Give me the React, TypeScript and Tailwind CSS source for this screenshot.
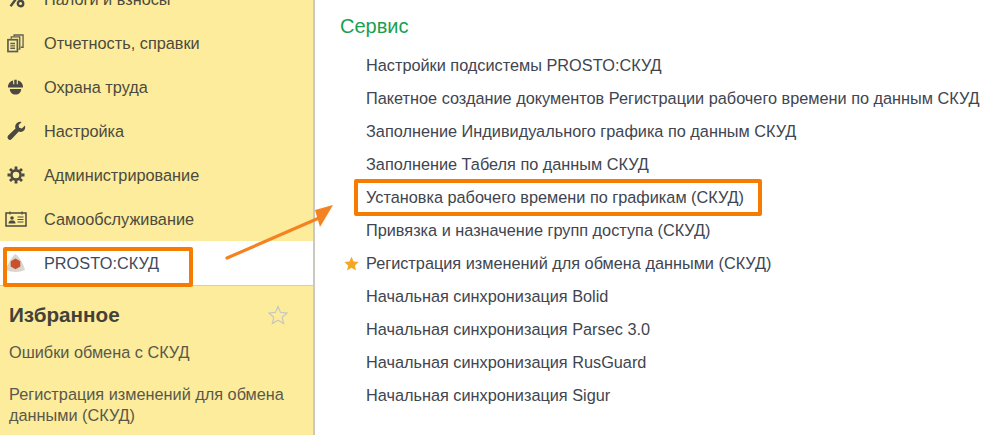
import React from 'react';

const Percent = () => (
  <svg width="20" height="20" viewBox="0 0 22 22" fill="none" stroke="#4a4a42" strokeWidth="2.6">
    <circle cx="6" cy="6" r="3" />
    <circle cx="16" cy="16" r="3" />
    <path d="M17 3 5 19" />
  </svg>
);

const Reports = () => (
  <svg width="17" height="19" viewBox="0 0 18 20" fill="none" stroke="#5f5f50" strokeWidth="1.4">
    <rect x="1" y="6" width="10" height="12.5" fill="#fbec9d" strokeWidth="1.8" />
    <path d="M3.5 10h5M3.5 12.5h5M3.5 15h5" />
    <path d="M4.5 5V3h9v13h-1.5" />
    <path d="M7.5 2.5V1h9.500v13h-2.500" />
  </svg>
);

const Helmet = () => (
  <svg width="17" height="18" viewBox="0 0 18 18" fill="#4a4a42">
    <path d="M1 9.500C1 5.500 3.300 3 6.500 2.200V6h1.200V1.200h2.600V6h1.200V2.200C14.700 3 17 5.500 17 9.500z" />
    <path d="M3 11h12c0 3.500-2.500 6-6 6s-6-2.500-6-6z" />
  </svg>
);

const Wrench = () => (
  <svg width="20" height="20" viewBox="0 0 20 20" fill="#4a4a42">
    <path d="M19 4.500c.6 2.500-.2 4.700-2 5.800-1.400.8-2.900.8-4.200.3L5.700 18a2.400 2.400 0 0 1-3.500-.1 2.400 2.400 0 0 1 0-3.400l7.300-7c-.5-1.400-.4-3 .4-4.300C11 1.300 13.300.4 15.600 1l-3 3 .6 2.800 2.700.7z" />
  </svg>
);

const Gear = () => (
  <svg width="18" height="18" viewBox="0 0 18 18" fill="none" stroke="#4a4a42">
    <circle cx="9" cy="9" r="4.600" strokeWidth="2.600" />
    <path d="M9 .5v3M9 14.500v3M.5 9h3M14.500 9h3M3 3l2.100 2.100M12.900 12.900 15 15M15 3l-2.100 2.100M5.100 12.900 3 15" strokeWidth="2.800" />
  </svg>
);

const IdCard = () => (
  <svg width="22" height="16" viewBox="0 0 22 16" fill="none" stroke="#4a4a42">
    <rect x="1" y="2" width="20" height="13" strokeWidth="1.500" />
    <path d="M5 .5v3M17 .5v3" strokeWidth="1.200" />
    <circle cx="7" cy="7" r="1.800" fill="#4a4a42" stroke="none" />
    <path d="M3.500 12.500c0-2.500 1.500-3 3.500-3s3.500.5 3.500 3z" fill="#4a4a42" stroke="none" />
    <path d="M12.500 6h6M12.500 8.500h6M12.500 11h6" strokeWidth="1.200" />
  </svg>
);

const ProstoLogo = () => (
  <svg width="21" height="20" viewBox="0 0 20 20">
    <path d="M10 1 C14 4 18 11 19.500 17 C14 19.500 6 19.500 .5 17 C2 11 6 4 10 1z" fill="#d8d6d0" />
    <path d="M10 5.500 14.800 8.200v5.300L10 16.200 5.200 13.500V8.200z" fill="#c9502a" />
  </svg>
);

const menu = [
  { label: 'Налоги и взносы', icon: <Percent /> },
  { label: 'Отчетность, справки', icon: <Reports /> },
  { label: 'Охрана труда', icon: <Helmet /> },
  { label: 'Настройка', icon: <Wrench /> },
  { label: 'Администрирование', icon: <Gear /> },
  { label: 'Самообслуживание', icon: <IdCard /> },
];

const links = [
  'Настройки подсистемы PROSTO:СКУД',
  'Пакетное создание документов Регистрации рабочего времени по данным СКУД',
  'Заполнение Индивидуального графика по данным СКУД',
  'Заполнение Табеля по данным СКУД',
  'Установка рабочего времени по графикам (СКУД)',
  'Привязка и назначение групп доступа (СКУД)',
  'Регистрация изменений для обмена данными (СКУД)',
  'Начальная синхронизация Bolid',
  'Начальная синхронизация Parsec 3.0',
  'Начальная синхронизация RusGuard',
  'Начальная синхронизация Sigur',
];

export default function App() {
  return (
    <div className="relative flex h-[435px] w-[989px] overflow-hidden bg-white font-['Liberation_Sans',Arial,sans-serif] text-[16.3px]">
      <aside className="flex h-full w-[315px] shrink-0 flex-col overflow-hidden border-r-2 border-[#c9c9c0] bg-[#fcec9c] text-[#4c4a3c]">
        <div className="-mt-[23px] flex flex-col">
          {menu.map((item) => (
            <div key={item.label} className="flex h-[44px] items-center">
              <div className="flex w-[44px] shrink-0 justify-center pr-[13px]">{item.icon}</div>
              <span>{item.label}</span>
            </div>
          ))}
          <div className="flex h-[45px] items-center border-b border-[#d8d0a0] bg-white text-[#3f4a5c]">
            <div className="flex w-[44px] shrink-0 justify-center pr-[13px]">
              <ProstoLogo />
            </div>
            <span>PROSTO:СКУД</span>
          </div>
        </div>
        <div className="flex items-center justify-between pl-[9px] pr-[25px] pt-[15px]">
          <span className="text-[20.7px] font-bold leading-[28px] text-[#444238]">Избранное</span>
          <svg width="20" height="20" viewBox="0 0 20 20" fill="none" stroke="#c8c8bc" strokeWidth="1.200">
            <path d="M10 1.500 12.600 7.400 19 8 14.200 12.200 15.600 18.500 10 15.200 4.400 18.500 5.800 12.200 1 8 7.400 7.400z" />
          </svg>
        </div>
        <div className="pl-[9px] pt-[11px] text-[#5a584a]">Ошибки обмена с СКУД</div>
        <div className="pl-[9px] pr-[20px] pt-[20px] leading-[21px] text-[#5a584a]">
          Регистрация изменений для обмена данными (СКУД)
        </div>
      </aside>

      <main className="flex-1 pl-[25px] pt-[13px] text-[#404550]">
        <h2 className="text-[20px] leading-[26px] text-[#1aa052]">Сервис</h2>
        <ul className="mt-[10px] flex flex-col">
          {links.map((link) => (
            <li key={link} className="relative flex h-[33px] items-center whitespace-nowrap pl-[26px]">
              {link.startsWith('Регистрация') && (
                <svg className="absolute left-[4px] top-[9px]" width="15" height="15" viewBox="0 0 20 20" fill="#f5a623">
                  <path d="M10 1 12.800 7.200 19.500 8 14.500 12.600 15.900 19.200 10 15.800 4.100 19.200 5.500 12.600.5 8 7.200 7.200z" />
                </svg>
              )}
              {link}
            </li>
          ))}
        </ul>
      </main>

      {/* callouts drawn on top of the screenshot */}
      <div className="absolute left-[3px] top-[247px] h-[40px] w-[190px] rounded-[2px] border-4 border-[#f57c00]" />
      <div className="absolute left-[354px] top-[179px] h-[37px] w-[408px] rounded-[2px] border-4 border-[#f57c00]" />
      <svg className="absolute left-[220px] top-[200px]" width="120" height="65" viewBox="0 0 120 65">
        <path d="M7 58 99 18" stroke="#f58220" strokeWidth="3.200" strokeLinecap="round" />
        <path d="M113 5 95 10 100 27z" fill="#f58220" />
      </svg>
    </div>
  );
}
